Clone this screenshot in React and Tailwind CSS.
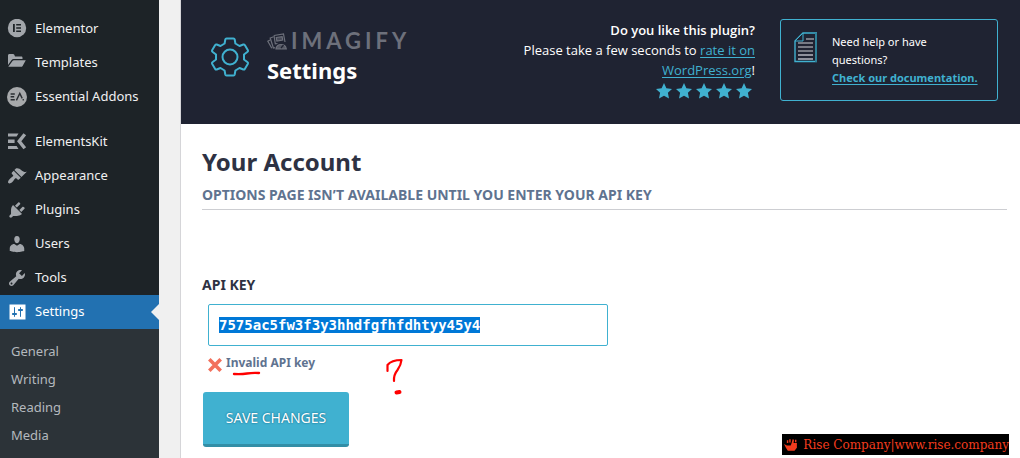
import React, { useEffect, useRef } from "react";

const dashicons = {
	appearance:
		"M14.48 11.06L7.41 3.99l1.5-1.5c.5-.56 2.3-.47 3.51.32 1.21.8 1.43 1.28 2.91 2.1 1.18.64 2.45 1.26 4.45.85zm-.71.71L6.7 4.7 4.93 6.47c-.39.39-.39 1.02 0 1.41l1.06 1.06c.39.39.39 1.03 0 1.42-.6.6-1.43 1.11-2.21 1.69-.35.26-.7.53-1.01.84C1.43 14.23.4 16.08 1.4 17.07c.99 1 2.84-.03 4.18-1.36.31-.31.58-.66.85-1.02.57-.78 1.08-1.61 1.69-2.21.39-.39 1.02-.39 1.41 0l1.06 1.06c.39.39 1.02.39 1.41 0z",
	plugins:
		"M13.11 4.36L9.87 7.6 8 5.73l3.24-3.24c.35-.34 1.05-.2 1.56.32.52.51.66 1.21.31 1.55zm-8 1.77l.91-1.12 9.01 9.01-1.19.84c-.71.71-2.63 1.16-3.82 1.16H6.14L4.9 17.26c-.59.59-1.54.59-2.12 0-.59-.58-.59-1.53 0-2.12l1.24-1.24v-3.88c0-1.13.4-3.19 1.09-3.89zm7.26 3.97l3.24-3.24c.34-.35 1.04-.21 1.55.31.52.51.66 1.21.31 1.55l-3.24 3.25z",
	users:
		"M10 9.25c-2.27 0-2.73-3.44-2.73-3.44C7 4.02 7.82 2 9.97 2c2.16 0 2.98 2.02 2.71 3.81 0 0-.41 3.44-2.68 3.44zm0 2.57L12.72 10c2.39 0 4.52 2.33 4.52 4.53v2.49s-3.65 1.13-7.24 1.13c-3.65 0-7.24-1.13-7.24-1.13v-2.49c0-2.25 1.94-4.48 4.47-4.48z",
	tools:
		"M16.68 9.77c-1.34 1.34-3.3 1.67-4.95.99l-5.41 6.52c-.99.99-2.59.99-3.58 0s-.99-2.59 0-3.57l6.52-5.42c-.68-1.65-.35-3.61.99-4.95 1.28-1.28 3.12-1.62 4.72-1.06l-2.89 2.89 2.82 2.82 2.86-2.87c.53 1.58.18 3.39-1.08 4.65zM3.81 16.21c.4.39 1.04.39 1.43 0 .4-.4.4-1.04 0-1.43-.39-.4-1.03-.4-1.43 0-.39.39-.39 1.03 0 1.43z",
	settings:
		"M18.5 17.5V2.500H2.500V17.500zM8 11h1c.55 0 1 .45 1 1s-.45 1-1 1H8v1.5c0 .28-.22.5-.5.5s-.5-.22-.5-.5V13H6c-.55 0-1-.45-1-1s.45-1 1-1h1V5.5c0-.28.22-.5.5-.5s.5.22.5.5V11zm5-2h-1c-.55 0-1-.45-1-1s.45-1 1-1h1V5.5c0-.28.22-.5.5-.5s.5.22.5.5V7h1c.55 0 1 .45 1 1s-.45 1-1 1h-1v5.5c0 .28-.22.5-.5.5s-.5-.22-.5-.5V9z",
};

const Dashicon = ({ name }) => (
	<svg viewBox="0 0 20 20" className="h-5 w-5" fill="currentColor" fillRule="evenodd" aria-hidden="true">
		<path d={dashicons[name]} />
	</svg>
);

const ElementorIcon = () => (
	<svg viewBox="0 0 20 20" className="h-5 w-5" aria-hidden="true">
		<circle cx="10" cy="9" r="9.2" fill="currentColor" />
		<path d="M6 5h1.8v8H6zM9.2 5H14v1.6H9.2zM9.2 8.2H14v1.6H9.2zM9.2 11.4H14V13H9.2z" fill="#1d2327" />
	</svg>
);

const TemplatesIcon = () => (
	<svg viewBox="0 0 20 20" className="h-5 w-5" fill="currentColor" aria-hidden="true">
		<path d="M1 12V2.500c0-.8.6-1.500 1.400-1.500H6c.6 0 1 .3 1.300.8L8 3.500h6.300c.7 0 1.200.500 1.200 1.200V6H6.600c-.8 0-1.500.4-2 1z" />
		<path d="M1.300 13.800l4-5.600c.4-.6 1-.9 1.700-.9h11.800l-3.200 5.600c-.3.6-.9.9-1.600.9z" />
	</svg>
);

const EssentialIcon = () => (
	<svg viewBox="0 0 20 20" className="h-5 w-5" aria-hidden="true">
		<circle cx="10" cy="10" r="10" fill="#a7a9ab" />
		<path d="M3.600 6.200h4.200v1.500H3.600zM3.600 9.100h3.600v1.500H3.600zM3.600 11.900h4.200v1.500H3.600zM15.600 11.900h1.300v1.500h-1.300z" fill="#2b2f33" />
		<path d="M9.400 13.400l3.400-7 2.400 5" fill="none" stroke="#2b2f33" strokeWidth="1.4" />
	</svg>
);

const ElementsKitIcon = () => (
	<svg viewBox="0 0 20 20" className="h-5 w-5" aria-hidden="true">
		<path d="M1 1.500h10.500L9.600 4.500H1zM1 7.500h6.600v3.500H1zM1 14h8.600l1.900 3H1z" fill="currentColor" />
		<path d="M17.800 2.300l-5.600 7 5.600 7" fill="none" stroke="currentColor" strokeWidth="3.400" />
	</svg>
);

const menuItems = [
	{ name: "Elementor", icon: <ElementorIcon /> },
	{ name: "Templates", icon: <TemplatesIcon /> },
	{ name: "Essential Addons", icon: <EssentialIcon /> },
	{ name: "ElementsKit", icon: <ElementsKitIcon />, separated: true },
	{ name: "Appearance", icon: <Dashicon name="appearance" /> },
	{ name: "Plugins", icon: <Dashicon name="plugins" /> },
	{ name: "Users", icon: <Dashicon name="users" /> },
	{ name: "Tools", icon: <Dashicon name="tools" /> },
	{ name: "Settings", icon: <Dashicon name="settings" />, current: true },
];

const subItems = ["General", "Writing", "Reading", "Media"];

const Sidebar = () => (
	<nav className="flex w-[159px] shrink-0 flex-col bg-[#1d2327] pt-3 text-[13px]">
		<ul>
			{menuItems.map((item) => (
				<li key={item.name} className={item.separated ? "pt-[11px]" : ""}>
					<a
						href="#"
						className={
							item.current
								? "relative flex h-[34px] items-center gap-2 bg-[#2271b1] pl-[7px] text-white"
								: "flex h-[34px] items-center gap-2 pl-[7px] text-[#f0f0f1]"
						}
					>
						<span className={item.current ? "text-white" : "text-[#a2a6ab]"}>{item.icon}</span>
						{item.name}
						{item.current && (
							<span className="absolute top-[9px] right-0 border-8 border-l-0 border-transparent border-r-[#f0f0f0]" />
						)}
					</a>
				</li>
			))}
		</ul>
		<ul className="flex-1 bg-[#2c3338] pt-[9px] text-[#b4b9be]">
			{subItems.map((name) => (
				<li key={name}>
					<a href="#" className="flex h-7 items-center pl-[11px]">
						{name}
					</a>
				</li>
			))}
		</ul>
	</nav>
);

const GearIcon = () => (
	<svg viewBox="0 0 40 40" className="h-10 w-10 shrink-0" fill="none" stroke="#40b1d0" strokeWidth="2" strokeLinejoin="round" aria-hidden="true">
		<path d="M16.500 1.500h7q1 0 1.200 1l.7 4 4.100 2.500 3.800-1.500q1-.3 1.500.6l3.100 5.200q.5.900-.3 1.500L34 17.500v5l3.600 2.700q.8.600.3 1.500l-3.100 5.200q-.5.900-1.500.6L29.500 31l-4.100 2.500-.7 4q-.2 1-1.200 1h-7q-1 0-1.200-1l-.7-4-4.100-2.500-3.800 1.500q-1 .3-1.500-.6l-3.100-5.200q-.5-.900.3-1.500L6 22.500v-5l-3.600-2.700q-.8-.600-.3-1.500l3.100-5.200q.5-.900 1.500-.6L10.500 9l4.100-2.500.7-4q.2-1 1.200-1z" />
		<circle cx="20" cy="20" r="7.5" />
	</svg>
);

const PhotosIcon = () => (
	<svg viewBox="0 0 20 17" className="h-[17px] w-5" fill="none" stroke="currentColor" strokeWidth="1.2" aria-hidden="true">
		<path d="M7 2.500L16.500 1l1.500 8M7 2.500l1.300 8.300 2.200-.3" />
		<path d="M9.300 4.500l5.800-.9.600 3.400-5.800 1z" fill="currentColor" fillOpacity=".5" />
		<path d="M6.600 3.800L3.200 5l3.200 10 1.800-.4M3 7L.8 8.300l4 7" />
		<path d="M9 16a5.200 5.200 0 0 1 10.300 0z" fill="currentColor" fillOpacity=".7" />
		<path d="M14 15l2.500-3" stroke="#1f2332" />
	</svg>
);

const Star = () => (
	<svg viewBox="0 0 16 16" className="h-4 w-4" fill="#40b1d0" aria-hidden="true">
		<path d="M8 0l2.400 5.200 5.600.7-4.100 3.900L13 15.600 8 12.800l-5 2.800 1.100-5.800L0 5.900l5.600-.7z" />
	</svg>
);

const DocIcon = () => (
	<svg viewBox="0 0 24 31" className="h-[31px] w-6 shrink-0" fill="none" aria-hidden="true">
		<path d="M9 1h13.300v28.500H1V9z" stroke="#40b1d0" strokeWidth="1.4" />
		<path d="M9 1v8H1z" fill="#1f2332" stroke="#40b1d0" />
		<path d="M22 1v29" stroke="#2e8199" strokeWidth="2" />
		<path d="M12 7h8M4 11h15M4 15h15M4 19h15" stroke="#d0d1d6" strokeWidth="1.2" />
		<path d="M4 23h15M4 27h15" stroke="#8f919c" strokeWidth="2" />
	</svg>
);

const Header = () => (
	<header className="flex h-[124px] items-start bg-[#1f2332] pr-[22px] pl-[29px] text-white">
		<div className="flex flex-1 gap-4 pt-8">
			<div className="pt-[5px]">
				<GearIcon />
			</div>
			<div className="pl-px">
				<div className="flex h-[18px] items-center gap-1 text-[#6d707b]">
					<PhotosIcon />
					<span className="font-[Lato] text-[22px] leading-[18px] font-bold tracking-[4px]">IMAGIFY</span>
				</div>
				<h1 className="pt-[5px] text-[22px] leading-[30px] font-bold">Settings</h1>
			</div>
		</div>
		<div className="w-[240px] pt-5 text-right font-['Open_Sans',sans-serif] text-[13px] leading-5">
			<p className="font-semibold">Do you like this plugin?</p>
			<p>
				Please take a few seconds to{" "}
				<a href="#" className="text-[#40b1d0] underline underline-offset-2">
					rate it on WordPress.org
				</a>
				!
			</p>
			<div className="flex justify-end gap-1 pt-[3px] pr-[3px]">
				{[1, 2, 3, 4, 5].map((n) => (
					<Star key={n} />
				))}
			</div>
		</div>
		<div className="mt-[19px] ml-[25px] flex h-[82px] w-[218px] gap-[14px] rounded-[3px] border border-[#40b1d0] pt-3 pl-[13px]">
			<DocIcon />
			<p className="pt-px text-[11px] leading-[18px]">
				Need help or have
				<br />
				questions?
				<br />
				<a href="#" className="font-bold text-[#40b1d0] underline underline-offset-2">
					Check our documentation.
				</a>
			</p>
		</div>
	</header>
);

const AccountForm = () => {
	const keyInput = useRef(null);

	useEffect(() => {
		keyInput.current.focus();
		keyInput.current.select();
	}, []);

	return (
		<form className="relative flex flex-col items-start" onSubmit={(e) => e.preventDefault()}>
			<label htmlFor="api-key" className="text-sm leading-5 font-bold text-[#2e3243]">
				API KEY
			</label>
			<input
				id="api-key"
				ref={keyInput}
				type="text"
				defaultValue="7575ac5fw3f3y3hhdfgfhfdhtyy45y4"
				className="mt-[9px] ml-[6px] h-[42px] w-[400px] rounded-xs border border-[#40b1d0] px-[10px] font-['DejaVu_Sans_Mono',monospace] text-sm font-bold text-[#2e3243] outline-none selection:bg-[#0078d7] selection:text-white"
			/>
			<p className="mt-[7px] ml-[6px] flex items-center gap-1 text-xs leading-5 font-bold text-[#5f7390]">
				<svg viewBox="0 0 14 14" className="mt-1 h-[14px] w-[14px]" stroke="#f2705c" strokeWidth="3.6" aria-hidden="true">
					<path d="M1.300 1.300l11.400 11.400M12.700 1.300L1.300 12.700" />
				</svg>
				Invalid API key
			</p>
			<button
				type="submit"
				className="mt-[19px] ml-px h-[55px] w-[146px] rounded-[3px] border-b-[3px] border-[#338ea6] bg-[#40b1d0] text-sm text-white [text-shadow:0_0_2px_#005a7a]"
			>
				SAVE CHANGES
			</button>
			{/* red pen marks over the form */}
			<svg viewBox="0 0 180 45" className="pointer-events-none absolute top-[80px] left-[30px] h-[45px] w-[180px]" fill="none" stroke="#f00" strokeLinecap="round" strokeLinejoin="round" aria-hidden="true">
				<path d="M2 19q7 .500 13-.500t12-.500" strokeWidth="2.4" />
				<path d="M155.500 16l0-6q4-5 14-5-.500 5-4 10-4 5-3.500 11" strokeWidth="2.2" />
				<path d="M164.500 37.500l3-.500" strokeWidth="4" />
			</svg>
		</form>
	);
};

const App = () => {
	return (
		<div className="flex min-h-screen bg-[#f0f0f0] font-['Noto_Sans',sans-serif]">
			<Sidebar />
			<main className="relative ml-[21px] flex-1 border-l border-[#d5d5d8] bg-white">
				<Header />
				<section className="pt-[22px] pr-[13px] pl-[21px]">
					<h2 className="text-2xl leading-8 font-bold text-[#2e3243]">Your Account</h2>
					<div className="border-b border-[#cdced2] pt-[7px] pb-1 text-sm leading-5 font-bold text-[#5f7390]">
						OPTIONS PAGE ISN’T AVAILABLE UNTIL YOU ENTER YOUR API KEY
					</div>
					<div className="pt-[65px]">
						<AccountForm />
					</div>
				</section>
				<a
					href="#"
					className="absolute right-[11px] bottom-[3px] flex h-[21px] w-[227px] items-center gap-[6px] bg-black pl-[2px] font-['DejaVu_Serif',serif] text-xs whitespace-nowrap text-[#f23c1e]"
				>
					<svg viewBox="0 0 14 14" className="h-[14px] w-[14px]" fill="currentColor" aria-hidden="true">
						<path d="M0 6l3 1.500h4L8 5l1-4 1.500.500L10 5h3.500v5L11 13H4L2 10z" />
						<path d="M3 2h1.500v3H3zM5.500 1H7v3.500H5.500zM11.500 1.500H13V4h-1.500z" />
					</svg>
					Rise Company|www.rise.company
				</a>
			</main>
		</div>
	);
};

export default App;
